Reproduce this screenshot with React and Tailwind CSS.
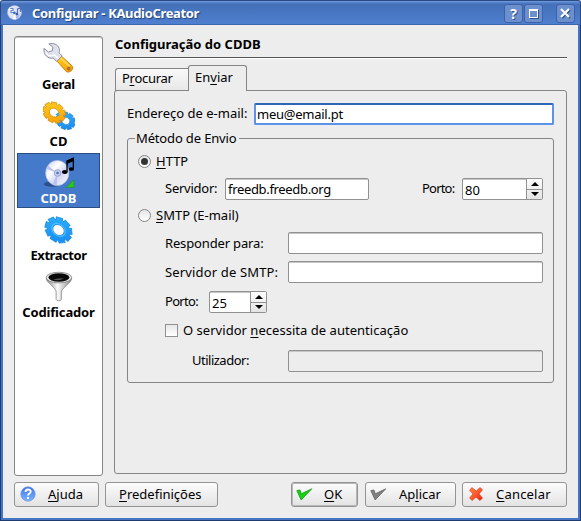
import React from "react";

const gearPath = (() => {
  const n = 9;
  const pts = [];
  for (let i = 0; i < n; i++) {
    const a = (i / n) * Math.PI * 2;
    [[-0.3, 10.8], [-0.23, 13.4], [0.23, 13.4], [0.3, 10.8]].forEach(([d, r]) => {
      pts.push(`${(Math.cos(a + d) * r).toFixed(2)} ${(Math.sin(a + d) * r).toFixed(2)}`);
    });
  }
  return `M${pts.join("L")}Z M5.6 0A5.6 5.6 0 1 0 -5.6 0A5.6 5.6 0 1 0 5.6 0Z`;
})();

function Defs() {
  return (
    <defs>
      <linearGradient id="gold" x1="0" y1="0" x2="1" y2="1">
        <stop offset="0" stopColor="#ffd21c" />
        <stop offset="1" stopColor="#f79a08" />
      </linearGradient>
      <linearGradient id="sky" x1="0" y1="0" x2="1" y2="1">
        <stop offset="0" stopColor="#2fb4ff" />
        <stop offset="1" stopColor="#1386f0" />
      </linearGradient>
      <linearGradient id="steel" x1="0" y1="0" x2="1" y2="0">
        <stop offset="0" stopColor="#8a8a8a" />
        <stop offset=".45" stopColor="#fafafa" />
        <stop offset="1" stopColor="#888" />
      </linearGradient>
      <linearGradient id="disc" x1="0" y1="0" x2="1" y2="1">
        <stop offset="0" stopColor="#c3c9f2" />
        <stop offset=".35" stopColor="#fff" />
        <stop offset=".6" stopColor="#d3d8f4" />
        <stop offset="1" stopColor="#fff" />
      </linearGradient>
    </defs>
  );
}

function WrenchIcon() {
  return (
    <svg width="32" height="32" viewBox="0 0 32 32">
      <Defs />
      <path d="M13 17.500l4.800-4.700L29.300 23.500c2.500 3-1.300 7.800-5.600 6.200z" fill="url(#gold)" stroke="#c87408" strokeWidth=".9" />
      <path d="M17.500 15.500l9.500 8.500" stroke="#ffd657" strokeWidth="2" />
      <path d="M.6 5.500l4.500 3.800 4-1.300.6-3.800L5.500 1C11-.8 16.500 2.500 16.500 7.500c0 1-.2 1.800-.5 2.600l3.300 3.200-5.800 5.700-3.500-3.500C5.200 17-.8 12 .6 5.500z" fill="#dfe1ec" stroke="#888b9a" strokeWidth="1" />
      <path d="M2.200 9.500c2 3.800 5.500 4.500 9 2.700l4.300 3.800" stroke="#fff" strokeWidth="1.400" fill="none" />
      <circle cx="26" cy="26.400" r="1.600" fill="#b77b35" stroke="#7d5525" strokeWidth=".5" />
    </svg>
  );
}

function GearsIcon() {
  return (
    <svg width="32" height="32" viewBox="0 0 32 32">
      <g transform="translate(23 21.500) rotate(30) scale(.78 .66)">
        <path d={gearPath} fill="url(#sky)" stroke="#2479c4" strokeWidth=".9" fillRule="evenodd" />
      </g>
      <g transform="translate(11 13) rotate(35) scale(.94 .76)">
        <path d={gearPath} fill="url(#gold)" stroke="#d88a08" strokeWidth=".9" fillRule="evenodd" />
      </g>
      <path d="M12.500 15l3-2.500.8 3-2 1.500z" fill="#35aef0" />
    </svg>
  );
}

function GearIcon() {
  return (
    <svg width="32" height="32" viewBox="0 0 32 32">
      <g transform="translate(15.500 16.500) rotate(40) scale(1.140 .92)">
        <path d={gearPath} fill="url(#sky)" stroke="#2590e0" strokeWidth=".9" fillRule="evenodd" />
        <ellipse rx="6.800" ry="6.200" fill="none" stroke="#55c4ff" strokeWidth="1" />
      </g>
    </svg>
  );
}

function DiscIcon() {
  return (
    <svg width="32" height="32" viewBox="0 0 32 32">
      <ellipse cx="9" cy="28" rx="8.500" ry="2.700" fill="#294f8f" />
      <ellipse cx="14.200" cy="16.500" rx="12" ry="13" fill="url(#disc)" stroke="#aeb8e0" strokeWidth=".7" />
      <path d="M14.200 16.500L3.200 12l1.500-3zM14.200 16.500L9.700 28l4 1z" fill="#b9c2ee" />
      <circle cx="14.500" cy="16.500" r="3.400" fill="#c9cfee" stroke="#8694c4" strokeWidth=".8" />
      <circle cx="14.500" cy="16.500" r="1.400" fill="#4379c8" />
      <path d="M24.300 15V4.300L30.800 1.500v10" fill="none" stroke="#000" strokeWidth="1.400" />
      <path d="M24 3.500L31.500.3V4L24 7.200z" fill="#000" />
      <ellipse cx="22" cy="15.500" rx="2.900" ry="2" fill="#000" />
      <ellipse cx="28.800" cy="12.400" rx="2.700" ry="1.900" fill="#000" />
      <path d="M31.500 23.500v8h-8z" fill="#28c81e" stroke="#158d13" strokeWidth=".5" />
    </svg>
  );
}

function FunnelIcon() {
  return (
    <svg width="32" height="32" viewBox="0 0 32 32">
      <path d="M2.800 7c0 4 3.500 5.500 6 8.500 2.500 2.500 4.200 4 4.200 6.500v7.200c0 2 5.500 2 5.500 0V22c0-2.500 2-4 4.500-6.500 3-3 6-4.500 6-8.500z" fill="url(#steel)" stroke="#777" strokeWidth=".7" />
      <ellipse cx="15.900" cy="6.800" rx="13.200" ry="5.500" fill="#e8e8e8" stroke="#7a7a7a" strokeWidth=".8" />
      <ellipse cx="15.900" cy="6.700" rx="10.800" ry="4.300" fill="#080808" />
      <path d="M10 8.500q6 2.500 11-1-5 .2-11 1z" fill="#555" />
    </svg>
  );
}

function AppIcon() {
  return (
    <svg width="16" height="16" viewBox="0 0 16 16">
      <circle cx="7.500" cy="7.500" r="7" fill="#dfe4f8" stroke="#a9b8ea" strokeWidth=".6" />
      <path d="M7.500 7.500L1 5l2-3zM7.500 7.500L6 14.200l3 .2z" fill="#fff" />
      <path d="M9 9.500l4-1-1 4-3 1z" fill="#a9b8ee" />
      <path d="M3 3.500h3v2H4v2h3" fill="none" stroke="#6d88d0" strokeWidth="1.200" />
      <circle cx="7.300" cy="7.800" r="1.400" fill="#3e6fc0" />
      <path d="M10.500 8.500V4l3-1v4" stroke="#5570bd" strokeWidth="1.200" fill="none" />
      <circle cx="9.800" cy="9" r="1.300" fill="#3a55a5" />
    </svg>
  );
}

function Check({ gray }) {
  return (
    <svg width="17" height="13" viewBox="0 0 17 13" className="shrink-0">
      <path d="M.8 2.600L4 2l1.300 3.800L15.800.8 5.200 12z" fill={gray ? "#808080" : "#13d313"} stroke={gray ? "#636363" : "#159a15"} strokeWidth=".8" />
    </svg>
  );
}

function Cross() {
  return (
    <svg width="14" height="14" viewBox="0 0 14 14" className="shrink-0">
      <defs>
        <linearGradient id="fire" x1="0" y1="0" x2="1" y2="1">
          <stop offset="0" stopColor="#ff8a4c" />
          <stop offset=".5" stopColor="#ff5a2c" />
          <stop offset="1" stopColor="#ee1508" />
        </linearGradient>
      </defs>
      <path d="M.5 3L3 .6l4.200 3.500L11 .6l2.500 2.200L10 7l3.500 4-2.500 2.500L7 10l-4 3.500L.6 11 4 7z" fill="url(#fire)" stroke="#d8401e" strokeWidth=".7" />
    </svg>
  );
}

function HelpBadge() {
  return (
    <svg width="16" height="16" viewBox="0 0 16 16" className="shrink-0">
      <defs>
        <linearGradient id="help" x1="0" y1="0" x2="0" y2="1">
          <stop offset="0" stopColor="#3f74ee" />
          <stop offset="1" stopColor="#79b4ff" />
        </linearGradient>
      </defs>
      <circle cx="8" cy="8" r="7.200" fill="url(#help)" stroke="#6f92dd" strokeWidth=".7" />
      <path d="M5.500 6c0-3.200 5.200-3.200 5.200-.3C10.700 7.500 8 7.600 8 9.500" fill="none" stroke="#fff" strokeWidth="1.900" />
      <rect x="7" y="11" width="2" height="2" fill="#fff" />
    </svg>
  );
}

function Key({ children }) {
  return <span className="underline decoration-1 underline-offset-2">{children}</span>;
}

function TitleButton({ children, className = "" }) {
  return (
    <div className={`mt-[2px] flex h-[19px] w-[19px] items-center justify-center rounded-[3px] border border-[#3c61a6] bg-[#6c8fcd] ${className}`}>
      {children}
    </div>
  );
}

function SideItem({ icon, label, selected, labelClass = "" }) {
  return (
    <div className={`mb-[2px] flex h-[55px] flex-col items-center border pt-[3px] ${selected ? "border-[#2b4d85] bg-[#457acb] text-white" : "border-transparent"}`}>
      {icon}
      <div className={`mt-px h-[18px] whitespace-nowrap font-bold leading-[18px] ${labelClass}`}>{label}</div>
    </div>
  );
}

function Field({ value = "", disabled, className = "" }) {
  return (
    <div className={`flex h-[22px] shrink-0 items-center rounded-[2px] border border-[#919191] pl-[2px] shadow-[inset_0_1px_0_#c6c6c6] ${disabled ? "bg-[#ededed]" : "bg-white"} ${className}`}>
      {value}
    </div>
  );
}

function Spin({ value, className = "" }) {
  return (
    <div className={`flex h-[22px] shrink-0 rounded-[2px] border border-[#919191] bg-white shadow-[inset_0_1px_0_#c6c6c6] ${className}`}>
      <div className="flex flex-1 items-center pl-[2px] pt-px">{value}</div>
      <div className="flex w-[16px] flex-col border-l border-[#919191] bg-gradient-to-b from-[#fdfdfd] to-[#e4e4e4]">
        <div className="flex flex-1 items-center justify-center border-b border-[#919191]">
          <svg width="8" height="4" viewBox="0 0 8 4"><path d="M4 0L8 4H0z" /></svg>
        </div>
        <div className="flex flex-1 items-center justify-center">
          <svg width="8" height="4" viewBox="0 0 8 4"><path d="M0 0h8L4 4z" /></svg>
        </div>
      </div>
    </div>
  );
}

function Radio({ checked }) {
  return (
    <div className="flex h-[13px] w-[13px] shrink-0 items-center justify-center rounded-full border border-[#858585] bg-gradient-to-b from-[#e6e6e6] to-white">
      {checked && <div className="h-[7px] w-[7px] rounded-full bg-[#333]" />}
    </div>
  );
}

function Button({ children, className = "" }) {
  return (
    <div className={`flex h-[25px] shrink-0 items-center rounded-[3px] border border-[#949494] bg-gradient-to-b from-[#fcfcfc] to-[#e3e3e3] pb-px ${className}`}>
      {children}
    </div>
  );
}

export default function App() {
  return (
    <div className="flex h-[521px] w-[581px] flex-col overflow-hidden whitespace-nowrap bg-[#ededed] font-['Noto_Sans','Open_Sans',sans-serif] text-[13px] leading-[18px] text-black">
      <header className="flex h-[25px] shrink-0 items-center rounded-t-[3px] border-b border-l border-r border-t border-[#2a4a82] border-b-[#3c66ad] bg-gradient-to-b from-[#6390d8] via-[#4470b8] via-15% to-[#4e7fcf] pl-[6px] pr-[5px] shadow-[inset_0_1px_0_#6c96dc]">
        <AppIcon />
        <div className="ml-[9px] flex-1 pt-px font-bold tracking-[-0.34px] text-white [text-shadow:1px_1px_1px_#20407a]">Configurar - KAudioCreator</div>
        <TitleButton>
          <span className="text-[14px] font-bold leading-none text-white [text-shadow:1px_1px_0_#2c4e8c]">?</span>
        </TitleButton>
        <TitleButton className="ml-[1px]">
          <div className="h-[9px] w-[9px] border border-t-2 border-white shadow-[1px_1px_0_#2c4e8c]" />
        </TitleButton>
        <TitleButton className="ml-[13px]">
          <svg width="11" height="11" viewBox="0 0 11 11">
            <path d="M2 2l8 8M10 2l-8 8" stroke="#2c4e8c" strokeWidth="2.200" />
            <path d="M1 1l8 8M9 1l-8 8" stroke="#fff" strokeWidth="2.200" />
          </svg>
        </TitleButton>
      </header>

      <div className="flex min-h-0 flex-1 flex-col border-b border-l border-r border-[#1f3c70]">
        <div className="flex min-h-0 flex-1 flex-col border-b-2 border-l-2 border-r-2 border-[#4675c4] pl-[11px] pr-[11px] pt-[11px]">
          <div className="flex h-[440px] shrink-0">
            <nav className="h-[440px] w-[89px] shrink-0 rounded-[3px] border border-[#858585] bg-white px-[2px] pt-[2px] shadow-[inset_0_1px_0_#c6c6c6]">
              <SideItem icon={<WrenchIcon />} label="Geral" labelClass="tracking-[-0.3px]" />
              <SideItem icon={<GearsIcon />} label="CD" />
              <SideItem icon={<DiscIcon />} label="CDDB" selected />
              <SideItem icon={<GearIcon />} label="Extractor" labelClass="tracking-[-0.45px]" />
              <SideItem icon={<FunnelIcon />} label="Codificador" labelClass="tracking-[-0.15px]" />
            </nav>

            <main className="ml-[11px] flex w-[453px] flex-col">
              <h1 className="h-[22px] border-b border-[#555] pl-px pt-px text-[13px] font-bold leading-[14px] shadow-[0_1px_0_#fff]">Configuração do CDDB</h1>
              <div className="mt-[7px] flex h-[26px] shrink-0 items-end pl-px">
                <div className="h-[23px] w-[73px] rounded-tl-[3px] border border-r-0 border-[#858585] bg-gradient-to-b from-[#f9f9f9] to-[#e8e8e8] pl-[6px] tracking-[-0.3px]">P<Key>r</Key>ocurar</div>
                <div className="relative z-10 h-[26px] w-[59px] rounded-t-[3px] border border-b-0 border-[#858585] bg-[#ededed] pl-[6px] pt-[2px]">En<Key>v</Key>iar</div>
              </div>
              <section className="-mt-px flex h-[384px] shrink-0 flex-col rounded-[3px] border border-[#858585] pl-[12px] pt-[12px]">
                <div className="flex h-[22px] shrink-0 items-center">
                  <div className="w-[127px] pb-[2px]">Endereço de e-mail:</div>
                  <div className="flex h-[22px] w-[300px] items-center rounded-[2px] border-2 border-[#5c92ea] border-t-[#2f65b8] bg-white pl-px tracking-[-0.25px]">meu@email.pt</div>
                </div>

                <fieldset className="relative mt-[13px] h-[245px] w-[427px] shrink-0 rounded-[3px] border border-[#858585] pl-[10px] pt-[16px]">
                  <div className="absolute -top-[10px] left-[7px] bg-[#ededed] pl-px pr-[3px] tracking-[-0.15px]">Método de Envio</div>
                  <div className="flex h-[13px] items-center">
                    <Radio checked />
                    <div className="ml-[5px] pb-px"><Key>H</Key>TTP</div>
                  </div>
                  <div className="mt-[10px] flex h-[22px] items-center pl-[27px]">
                    <div className="w-[60px] pb-[2px] tracking-[-0.25px]">Servidor:</div>
                    <Field value="freedb.freedb.org" className="w-[144px] tracking-[-0.33px]" />
                    <div className="ml-[53px] w-[40px] pb-[2px] tracking-[-0.8px]">Porto:</div>
                    <Spin value="80" className="w-[81px]" />
                  </div>
                  <div className="mt-[9px] flex h-[13px] items-center">
                    <Radio />
                    <div className="ml-[5px] pb-px"><Key>S</Key>MTP (E-mail)</div>
                  </div>
                  <div className="mt-[10px] flex h-[22px] items-center pl-[27px]">
                    <div className="w-[123px] pb-px tracking-[-0.15px]">Responder para:</div>
                    <Field className="w-[255px]" />
                  </div>
                  <div className="mt-[7px] flex h-[22px] items-center pl-[27px]">
                    <div className="w-[123px] tracking-[0.15px]">Servidor de SMTP:</div>
                    <Field className="w-[255px]" />
                  </div>
                  <div className="mt-[8px] flex h-[22px] items-center pl-[27px]">
                    <div className="w-[44px] pb-[2px] tracking-[-0.7px]">Porto:</div>
                    <Spin value="25" className="w-[58px]" />
                  </div>
                  <div className="mt-[11px] flex h-[13px] items-center pl-[27px]">
                    <div className="h-[13px] w-[13px] border border-[#919191] bg-gradient-to-b from-[#e8e8e8] to-white" />
                    <div className="ml-[5px] pb-[2px] tracking-[0.03px]">O servidor <Key>n</Key>ecessita de autenticação</div>
                  </div>
                  <div className="mt-[12px] flex h-[23px] items-center pl-[54px]">
                    <div className="w-[96px] pb-[2px] tracking-[-0.5px]">Utilizador:</div>
                    <Field disabled className="w-[255px]" />
                  </div>
                </fieldset>
              </section>
            </main>
          </div>

          <footer className="mt-[6px] flex h-[25px] shrink-0 items-center">
            <Button className="w-[85px] pl-[5px]"><HelpBadge /><span className="ml-[12px]"><Key>A</Key>juda</span></Button>
            <Button className="ml-[6px] w-[113px] pl-[13px]"><span><Key>P</Key>redefinições</span></Button>
            <Button className="ml-[73px] w-[67px] pl-[4px] shadow-[inset_0_0_0_1px_#b8b8b8]"><Check /><span className="ml-[11px]"><Key>O</Key>K</span></Button>
            <Button className="ml-[7px] w-[91px] pl-[4px]"><Check gray /><span className="ml-[12px]">Ap<Key>l</Key>icar</span></Button>
            <Button className="ml-[6px] w-[105px] pl-[6px]"><Cross /><span className="ml-[13px] tracking-[0.2px]"><Key>C</Key>ancelar</span></Button>
          </footer>
        </div>
      </div>
    </div>
  );
}
